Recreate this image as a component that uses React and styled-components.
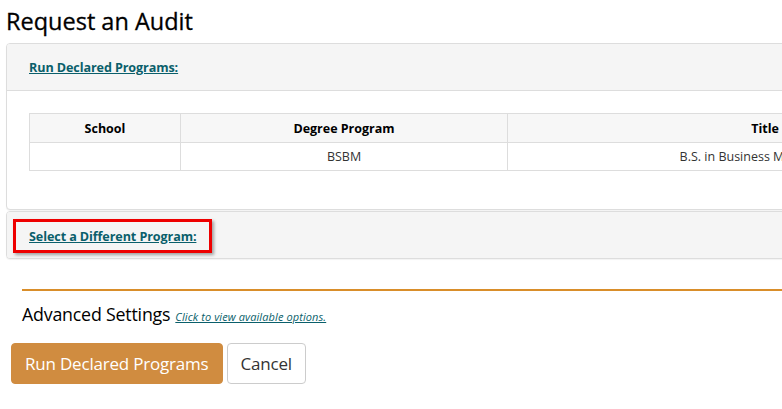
import React from 'react';
import styled, { createGlobalStyle } from 'styled-components';

const GlobalStyle = createGlobalStyle`
  html, body {
    margin: 0;
    padding: 0;
    background: #fff;
    overflow: hidden;
  }
  body {
    font-family: "Open Sans", "Noto Sans", sans-serif;
    color: #000;
  }
`;

const Page = styled.div`
  width: 782px;
  height: 409px;
  overflow: hidden;
  padding: 0 0 0 6px;
  box-sizing: border-box;
`;

const Title = styled.h1`
  margin: 0;
  padding-top: 6px;
  font-size: 23.5px;
  font-weight: 400;
  line-height: 30px;
  -webkit-text-stroke: 0.3px #000;
`;

const Panel = styled.div`
  margin-top: ${p => p.top || 0}px;
  width: 1100px;
  border: 1px solid #dddddd;
  border-radius: 4px;
  background: #fff;
  box-shadow: 0 1px 1px rgba(0, 0, 0, 0.05);
`;

const PanelHeader = styled.div`
  height: ${p => p.h}px;
  background: #f5f5f5;
  border-bottom: ${p => (p.last ? 'none' : '1px solid #dddddd')};
  border-radius: ${p => (p.last ? '3px' : '3px 3px 0 0')};
  display: flex;
  align-items: center;
  padding-left: ${p => p.pad || 22}px;
  box-sizing: border-box;
`;

const HeaderLink = styled.a`
  font-size: 12.6px;
  font-weight: 700;
  color: #0a5f6b;
  text-decoration: underline;
  letter-spacing: -0.1px;
  cursor: pointer;
`;

const Highlight = styled.div`
  border: 3px solid #ee0000;
  box-shadow: 2px 2px 3px rgba(0, 0, 0, 0.35);
  height: 34px;
  width: 199px;
  margin-top: 2px;
  box-sizing: border-box;
  display: flex;
  align-items: center;
  padding-left: 13px;
`;

const PanelBody = styled.div`
  padding: 22px 0 38px 22px;
`;

const Table = styled.table`
  width: 990px;
  border-collapse: collapse;
  table-layout: fixed;
  font-size: 12.5px;
`;

const Th = styled.th`
  width: ${p => p.w}px;
  height: 28px;
  padding: 0;
  background: #f7f7f7;
  border: 1px solid #dddddd;
  font-weight: 700;
  text-align: center;
  white-space: nowrap;
`;

const Td = styled.td`
  height: 27px;
  padding: 0;
  border: 1px solid #dddddd;
  text-align: center;
  color: #333;
  white-space: nowrap;
`;

const Advanced = styled.div`
  margin: 30px 0 0 16px;
`;

const Rule = styled.div`
  height: 2px;
  background: #d98e2a;
`;

const AdvRow = styled.div`
  display: flex;
  align-items: baseline;
  gap: 5px;
  margin-top: 11px;
`;

const AdvTitle = styled.span`
  font-size: 17.8px;
  letter-spacing: -0.2px;
`;

const AdvLink = styled.a`
  font-size: 11px;
  font-style: italic;
  color: #0a5f6b;
  text-decoration: underline;
  letter-spacing: 0.1px;
`;

const Buttons = styled.div`
  display: flex;
  gap: 4px;
  margin: 17px 0 0 5px;
`;

const Button = styled.button`
  height: 41px;
  padding: 0 ${p => p.px}px;
  border-radius: 4px;
  font-family: inherit;
  font-size: 17px;
  letter-spacing: -0.2px;
  border: 1px solid ${p => (p.primary ? '#d08c40' : '#cccccc')};
  background: ${p => (p.primary ? '#d08c40' : '#fff')};
  color: ${p => (p.primary ? '#fff' : '#333')};
  cursor: pointer;
`;

export default function App() {
  return (
    <>
      <GlobalStyle />
      <Page>
        <Title>Request an Audit</Title>
        <Panel top={7}>
          <PanelHeader h={47}>
            <HeaderLink>Run Declared Programs:</HeaderLink>
          </PanelHeader>
          <PanelBody>
            <Table>
              <thead>
                <tr>
                  <Th w={150}>School</Th>
                  <Th w={326}>Degree Program</Th>
                  <Th w={514}>Title</Th>
                </tr>
              </thead>
              <tbody>
                <tr>
                  <Td></Td>
                  <Td>BSBM</Td>
                  <Td>B.S. in Business Management</Td>
                </tr>
              </tbody>
            </Table>
          </PanelBody>
        </Panel>
        <Panel top={1}>
          <PanelHeader h={46} last pad={6}>
            <Highlight>
              <HeaderLink>Select a Different Program:</HeaderLink>
            </Highlight>
          </PanelHeader>
        </Panel>
        <Advanced>
          <Rule />
          <AdvRow>
            <AdvTitle>Advanced Settings</AdvTitle>
            <AdvLink>Click to view available options.</AdvLink>
          </AdvRow>
        </Advanced>
        <Buttons>
          <Button primary px={13}>Run Declared Programs</Button>
          <Button px={13}>Cancel</Button>
        </Buttons>
      </Page>
    </>
  );
}
